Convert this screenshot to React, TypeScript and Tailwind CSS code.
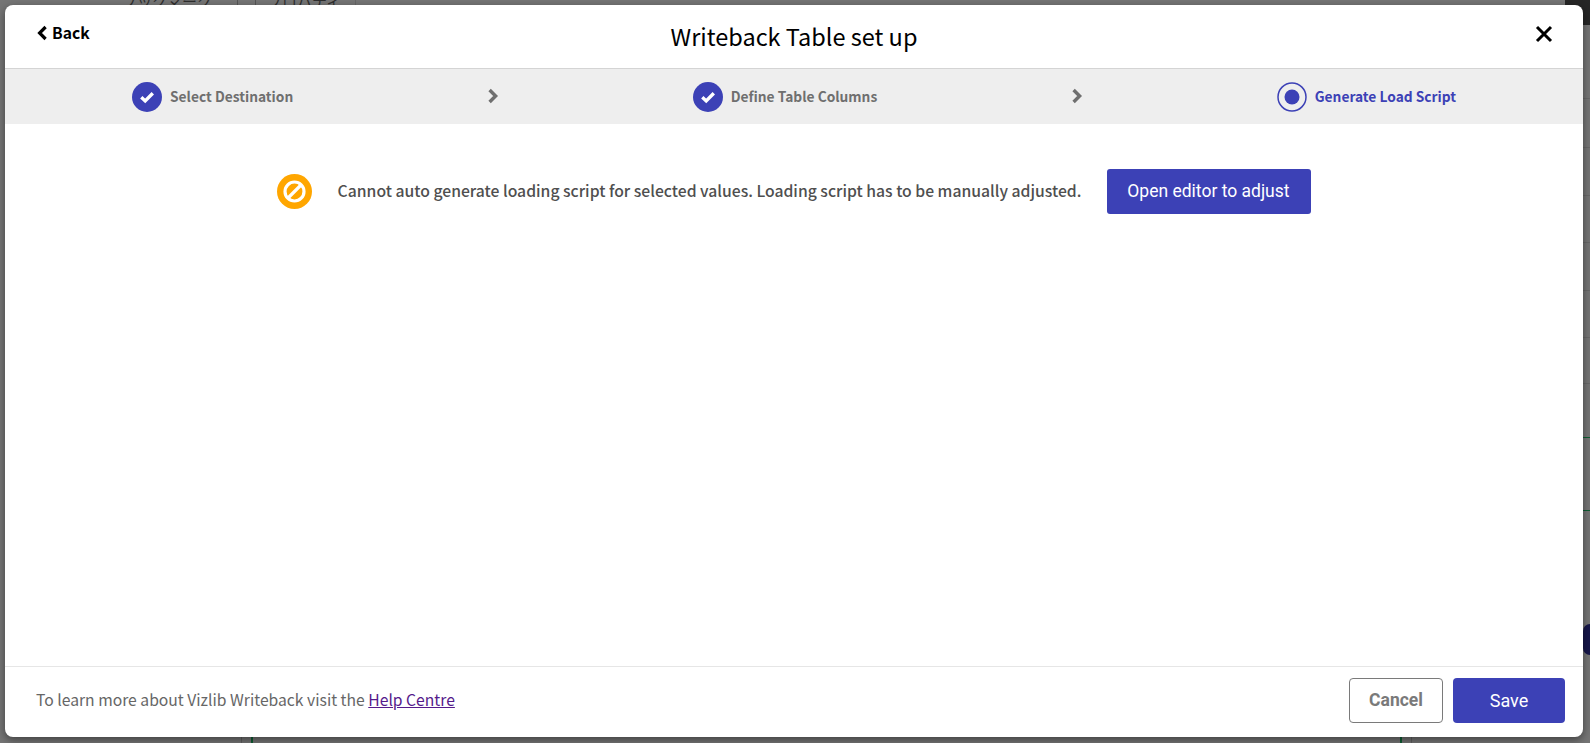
const font = { fontFamily: '"Noto Sans CJK JP", sans-serif' };
const roboto = { fontFamily: "Roboto, sans-serif" };

const rightLines = [98, 147, 195, 242, 290, 337, 383];

function StepDone({ label }: { label: string }) {
  return (
    <div className="flex items-center gap-2">
      <svg width="30" height="30" viewBox="0 0 30 30" className="block">
        <circle cx="15" cy="15" r="15" fill="#3c41b6" />
        <path d="M9.3 15.3l3.9 3.6 7.6-7.6" fill="none" stroke="#fff" strokeWidth="3.4" />
      </svg>
      <span className="-translate-y-[1px] text-[13.75px] font-bold leading-[20px] text-[#6f6f6f]">{label}</span>
    </div>
  );
}

function Chevron() {
  return (
    <svg width="12" height="16" viewBox="0 0 12 16" className="block -translate-y-[1px]">
      <path d="M2.6 2l6 6-6 6" fill="none" stroke="#6f6f6f" strokeWidth="3.4" />
    </svg>
  );
}

function Backdrop() {
  return (
    <>
      <div className="absolute top-[-9px] left-[122px] text-[15px] leading-[20px] whitespace-nowrap text-[#2e2e2e]">ブックマーク</div>
      <div className="absolute top-[-9px] left-[267px] text-[15px] leading-[20px] whitespace-nowrap text-[#2e2e2e]">プロパティ</div>
      <div className="absolute top-0 left-[237px] h-[5px] w-px bg-[#555555]" />
      <div className="absolute top-0 left-[255px] h-[5px] w-px bg-[#555555]" />
      <div className="absolute top-0 left-[355px] h-[5px] w-px bg-[#666666]" />
      <div className="absolute top-0 right-0 h-[25px] w-[25px] bg-[#262626]" />
      {rightLines.map((y) => (
        <div key={y} className="absolute right-0 h-px w-[7px] bg-[#686868]" style={{ top: y }} />
      ))}
      <div className="absolute top-[437px] right-0 h-px w-[7px] bg-[#0f5d33]" />
      <div className="absolute top-[510px] right-0 h-px w-[7px] bg-[#0f5d33]" />
      <div className="absolute top-[624px] right-0 h-[31px] w-[7px] rounded-l-full bg-[#16164a]" />
      <div className="absolute bottom-0 left-[241px] h-[6px] w-px bg-[#5f5f5f]" />
      <div className="absolute bottom-0 left-[251px] h-[6px] w-[2px] bg-[#0f5d33]" />
      <div className="absolute bottom-0 left-[1400px] h-[6px] w-[2px] bg-[#0f5d33]" />
      <div className="absolute bottom-0 left-[1411px] h-[6px] w-px bg-[#5f5f5f]" />
    </>
  );
}

export default function App() {
  return (
    <div className="relative h-[743px] w-[1590px] overflow-hidden bg-[#757575]" style={font}>
      <Backdrop />
      <div className="absolute top-[5px] left-[5px] flex h-[732px] w-[1578px] flex-col overflow-hidden rounded-lg bg-white shadow-[0_3px_8px_rgba(0,0,0,0.45)]">
        <header className="relative flex h-[63px] shrink-0 items-center justify-center">
          <div className="absolute top-[16px] left-[31px] flex items-center gap-[4px] text-[15.7px] font-bold leading-[24px] text-black">
            <svg width="12" height="16" viewBox="0 0 12 16" className="block">
              <path d="M9.6 2l-6 6 6 6" fill="none" stroke="#000" strokeWidth="3.2" />
            </svg>
            Back
          </div>
          <h1 className="-translate-y-[1px] text-[23.5px] font-normal leading-[32px] text-black">Writeback Table set up</h1>
          <svg width="18" height="18" viewBox="0 0 18 18" className="absolute top-[20px] right-[30px]">
            <path d="M2 2l14 14M16 2L2 16" fill="none" stroke="#000" strokeWidth="3" />
          </svg>
        </header>
        <nav className="flex h-[56px] shrink-0 items-center justify-between border-t border-[#d4d4d4] bg-[#eeeeee] px-[127px]">
          <StepDone label="Select Destination" />
          <Chevron />
          <StepDone label="Define Table Columns" />
          <Chevron />
          <div className="flex items-center gap-2">
            <svg width="30" height="30" viewBox="0 0 30 30" className="block">
              <circle cx="15" cy="15" r="14" fill="none" stroke="#3c41b6" strokeWidth="1.5" />
              <circle cx="15" cy="15" r="7.5" fill="#3c41b6" />
            </svg>
            <span className="-translate-y-[1px] text-[13.75px] font-bold leading-[20px] text-[#3c41b6]">Generate Load Script</span>
          </div>
        </nav>
        <main className="flex flex-1 items-start justify-center pt-[45px]">
          <div className="flex items-center">
            <svg width="35" height="35" viewBox="0 0 35 35" className="block">
              <circle cx="17.5" cy="17.5" r="17.5" fill="#ffa600" />
              <circle cx="17.5" cy="17.5" r="9.5" fill="none" stroke="#fff" strokeWidth="3.2" />
              <path d="M11 24L24 11" stroke="#fff" strokeWidth="3.2" />
            </svg>
            <p className="ml-[26px] -translate-y-[1px] text-[15.72px] font-medium leading-[24px] text-[#4f4f4f]">
              Cannot auto generate loading script for selected values. Loading script has to be manually adjusted.
            </p>
            <button className="ml-[26px] h-[45px] w-[204px] rounded-[3px] bg-[#3c41b6] pr-[2px] text-[17.5px] text-white" style={roboto}>
              Open editor to adjust
            </button>
          </div>
        </main>
        <footer className="flex h-[71px] shrink-0 items-start justify-between border-t border-[#e6e6e6] pt-[11px] pr-[18px] pl-[31px]">
          <p className="pt-[10px] text-[15.7px] leading-[24px] text-[#666666]">
            To learn more about Vizlib Writeback visit the{" "}
            <a className="text-[#551a8b] underline">Help Centre</a>
          </p>
          <div className="flex gap-[10px]" style={roboto}>
            <button className="h-[45px] w-[94px] rounded-[4px] border border-[#7a7a7a] bg-white text-[17.5px] font-bold text-[#7a7a7a]">Cancel</button>
            <button className="h-[45px] w-[112px] rounded-[4px] bg-[#3c41b6] text-[18px] text-white">Save</button>
          </div>
        </footer>
      </div>
    </div>
  );
}
